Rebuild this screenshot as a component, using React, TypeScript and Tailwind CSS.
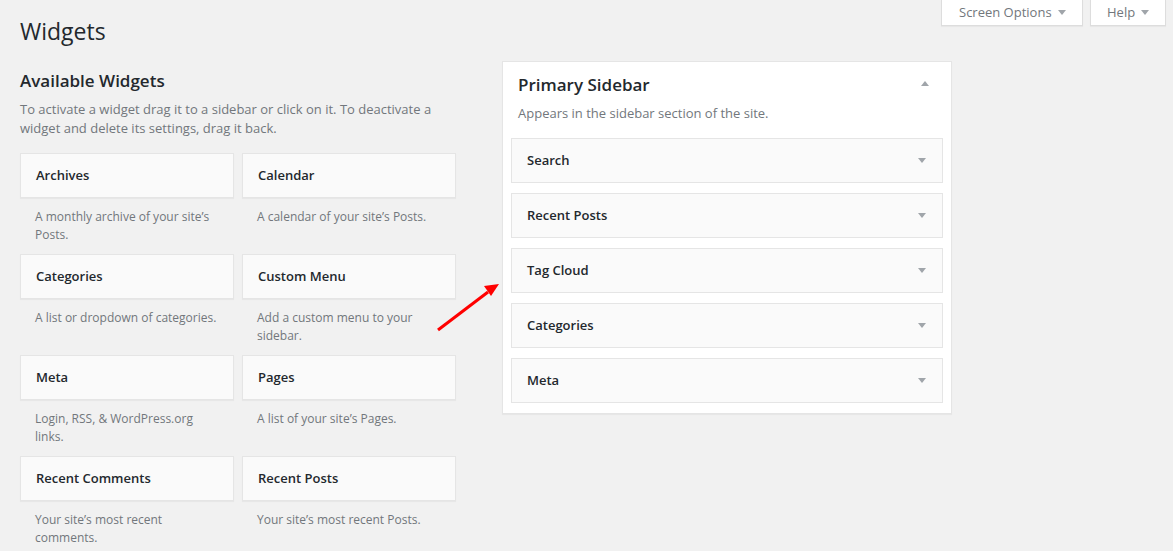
import React from 'react'

const WIDGETS = [
  { title: 'Archives', desc: 'A monthly archive of your site’s Posts.' },
  { title: 'Calendar', desc: 'A calendar of your site’s Posts.' },
  { title: 'Categories', desc: 'A list or dropdown of categories.' },
  { title: 'Custom Menu', desc: 'Add a custom menu to your sidebar.' },
  { title: 'Meta', desc: 'Login, RSS, & WordPress.org links.' },
  { title: 'Pages', desc: 'A list of your site’s Pages.' },
  { title: 'Recent Comments', desc: 'Your site’s most recent comments.' },
  { title: 'Recent Posts', desc: 'Your site’s most recent Posts.' },
]

const SIDEBAR_ITEMS = ['Search', 'Recent Posts', 'Tag Cloud', 'Categories', 'Meta']

function Caret({ up = false }: { up?: boolean }) {
  return (
    <svg width="8" height="5" viewBox="0 0 8 5" className="shrink-0">
      {up ? <polygon points="0,5 8,5 4,0" fill="#a0a5aa" /> : <polygon points="0,0 8,0 4,5" fill="#a0a5aa" />}
    </svg>
  )
}

export default function App() {
  return (
    <div
      className="relative min-h-[551px] bg-[#f1f1f1] text-[#23282d] overflow-hidden"
      style={{ fontFamily: '"Open Sans", "Noto Sans", sans-serif' }}
    >
      {/* screen meta links */}
      <div className="absolute top-0 right-[7px] flex gap-[7px]">
        <button className="h-[26px] w-[142px] flex items-center pl-[17px] pr-[16px] justify-between bg-white border border-t-0 border-[#ddd] shadow-[0_1px_1px_rgba(0,0,0,0.04)] text-[13px] text-[#72777c]">
          <span>Screen Options</span>
          <Caret />
        </button>
        <button className="h-[26px] w-[76px] flex items-center pl-[16px] pr-[16px] justify-between bg-white border border-t-0 border-[#ddd] shadow-[0_1px_1px_rgba(0,0,0,0.04)] text-[13px] text-[#72777c]">
          <span>Help</span>
          <Caret />
        </button>
      </div>

      <div className="px-[20px]">
        <h1 className="pt-[17px] text-[23px] leading-[29px] font-normal">Widgets</h1>

        <div className="flex items-start">
          {/* available widgets */}
          <div className="w-[436px] shrink-0">
            <h2 className="mt-[23px] text-[17px] leading-[24px] font-semibold">Available Widgets</h2>
            <p className="mt-[7px] text-[13px] leading-[19px] text-[#72777c]">
              To activate a widget drag it to a sidebar or click on it. To deactivate a widget and delete its settings, drag it back.
            </p>
            <div className="mt-[15px] grid grid-cols-[214px_214px] gap-x-[8px]">
              {WIDGETS.map((w) => (
                <div key={w.title} className="h-[101px] flex flex-col">
                  <div className="h-[45px] flex items-center px-[15px] bg-[#fafafa] border border-[#e5e5e5] shadow-[0_1px_1px_rgba(0,0,0,0.04)] text-[13px] font-semibold">
                    {w.title}
                  </div>
                  <p className="pt-[10px] px-[15px] text-[12px] leading-[18px] text-[#72777c]">{w.desc}</p>
                </div>
              ))}
            </div>
          </div>

          {/* primary sidebar */}
          <div className="ml-[46px] mt-[15px] w-[450px] bg-white border border-[#e5e5e5] shadow-[0_1px_1px_rgba(0,0,0,0.04)] px-[8px] pb-[10px]">
            <div className="pt-[11px] px-[7px] flex items-center justify-between">
              <h2 className="text-[17px] leading-[24px] font-semibold">Primary Sidebar</h2>
              <div className="mr-[7px] -mt-[3px]">
                <Caret up />
              </div>
            </div>
            <p className="mt-[7px] px-[7px] text-[13px] leading-[19px] text-[#72777c]">
              Appears in the sidebar section of the site.
            </p>
            <div className="mt-[15px] flex flex-col gap-[10px]">
              {SIDEBAR_ITEMS.map((item) => (
                <div
                  key={item}
                  className="h-[45px] flex items-center justify-between pl-[15px] pr-[16px] bg-[#fafafa] border border-[#e5e5e5] text-[13px] font-semibold"
                >
                  <span>{item}</span>
                  <Caret />
                </div>
              ))}
            </div>
          </div>
        </div>
      </div>

      {/* annotation arrow */}
      <svg className="absolute left-0 top-0 pointer-events-none" width="1173" height="551">
        <line x1="438" y1="330" x2="488" y2="292" stroke="#ff0000" strokeWidth="3" />
        <polygon points="499,284 484,286 491,296" fill="#ff0000" />
      </svg>
    </div>
  )
}
